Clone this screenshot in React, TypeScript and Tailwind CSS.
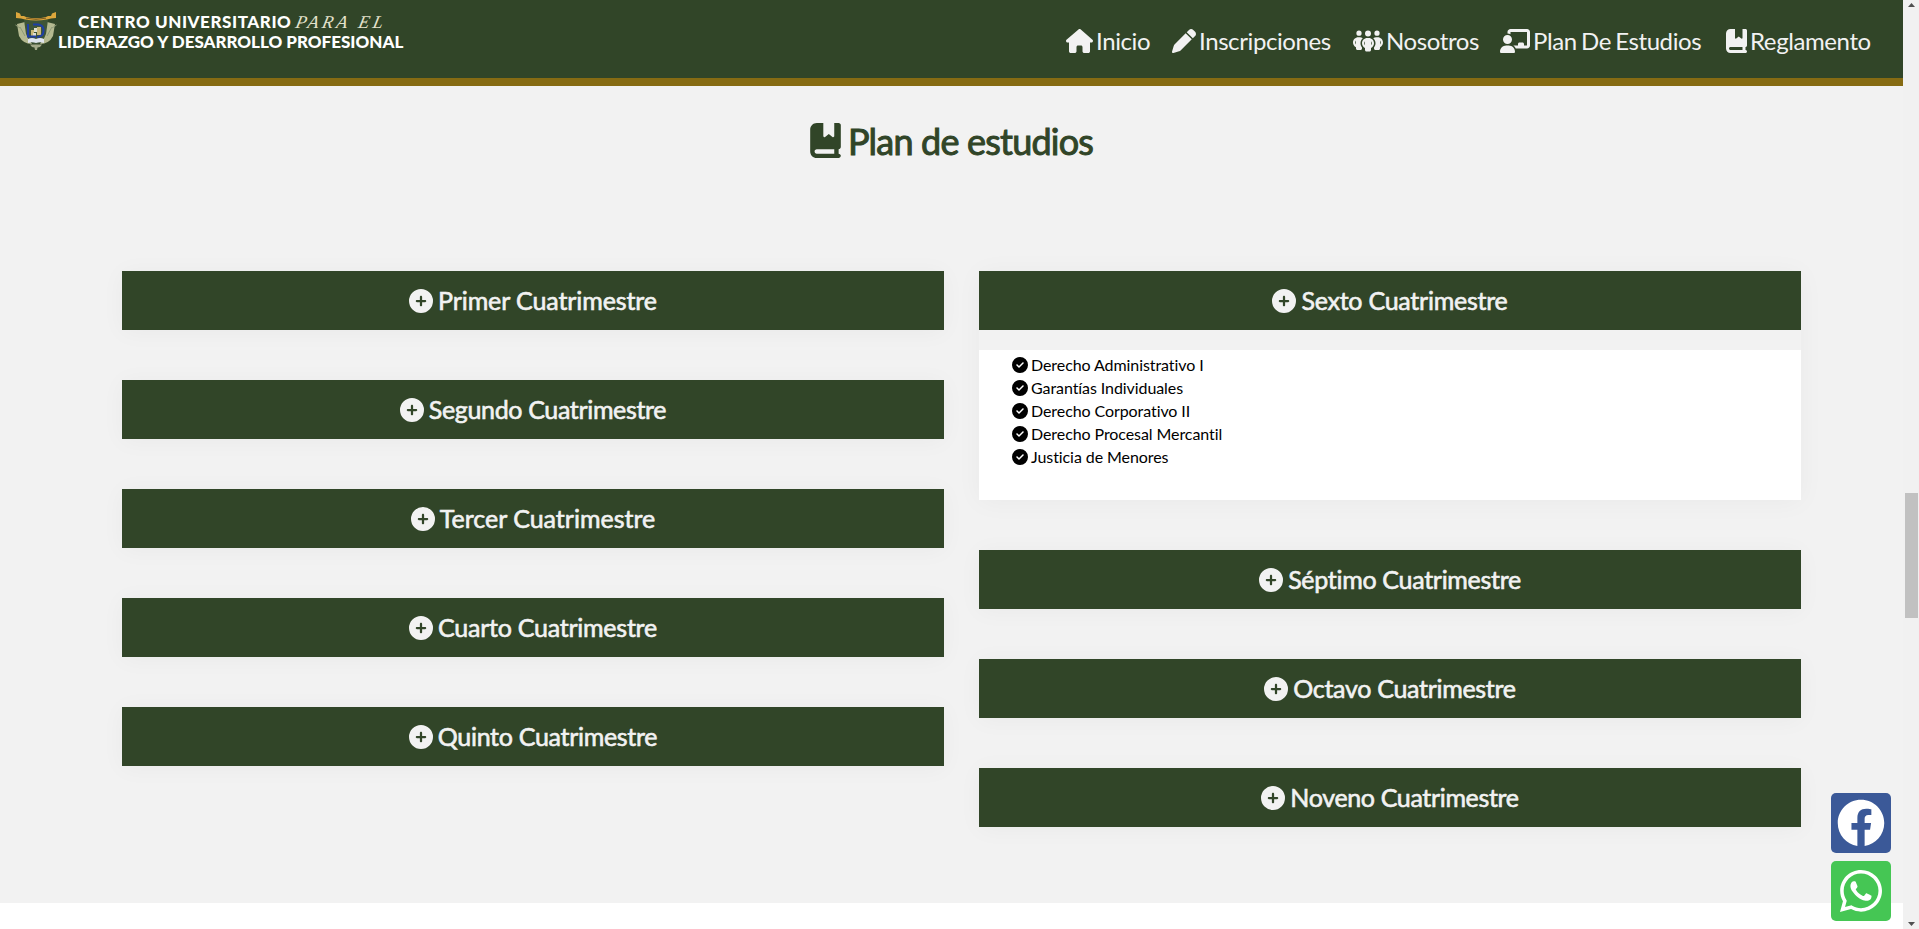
import React from "react";
import {
  FaHouse,
  FaPen,
  FaPeopleGroup,
  FaChalkboardUser,
  FaBookBookmark,
  FaCirclePlus,
  FaCircleCheck,
} from "react-icons/fa6";
import { FaFacebook, FaWhatsapp } from "react-icons/fa";

const nav = [
  { icon: FaHouse, label: "Inicio", width: "w-[106px]", iconWidth: "w-[27px]" },
  { icon: FaPen, label: "Inscripciones", width: "w-[181px]", iconWidth: "w-6" },
  { icon: FaPeopleGroup, label: "Nosotros", width: "w-[147px]", iconWidth: "w-[30px]" },
  { icon: FaChalkboardUser, label: "Plan De Estudios", width: "w-[226px]", iconWidth: "w-[30px]" },
  { icon: FaBookBookmark, label: "Reglamento", width: "w-[177px]", iconWidth: "w-[21px]" },
];

type Term = { name: string; tracking: string; subjects?: string[] };

const left: Term[] = [
  { name: "Primer", tracking: "tracking-[-0.1px]" },
  { name: "Segundo", tracking: "tracking-[-0.35px]" },
  { name: "Tercer", tracking: "tracking-[0px]" },
  { name: "Cuarto", tracking: "tracking-[-0.25px]" },
  { name: "Quinto", tracking: "tracking-[-0.3px]" },
];

const right: Term[] = [
  {
    name: "Sexto",
    tracking: "tracking-[-0.25px]",
    subjects: [
      "Derecho Administrativo I",
      "Garantías Individuales",
      "Derecho Corporativo II",
      "Derecho Procesal Mercantil",
      "Justicia de Menores",
    ],
  },
  { name: "Séptimo", tracking: "tracking-[-0.3px]" },
  { name: "Octavo", tracking: "tracking-[-0.3px]" },
  { name: "Noveno", tracking: "tracking-[-0.35px]" },
];

function Crest() {
  return (
    <svg className="h-[39px] w-[42px] shrink-0" viewBox="0 0 42 39">
      <path d="M2 12 L10 10 L13 26 L17 32 Q8 32 4 24 Z" fill="#b4b990" />
      <path d="M40 12 L32 10 L29 26 L25 32 Q34 32 38 24 Z" fill="#b4b990" />
      <path d="M0.500 13 L5 16 M41.500 13 L37 16 M5 15 L10 24 M37 15 L32 24" stroke="#8f9a78" fill="none" />
      <path d="M9 8 H33 L31 22 Q28 30 21 33 Q14 30 11 22 Z" fill="#3f5537" />
      <path d="M1 0 L5 1.500 L6 4 H9 L11 5 Q21 7.500 31 5 L33 4 H36 L37 1.500 L41 0 L41 6 L36 6.500 L32 7.500 Q21 9.500 10 7.500 L6 6.500 L1 6 Z" fill="#dca63c" />
      <path d="M11 6.200 Q21 8.500 31 6.200" stroke="#7c5b22" strokeWidth="1" fill="none" />
      <path d="M16 18 h3 v6 h-3 z M22 15 h4 v8 h-4 z" fill="#c9b878" />
      <path d="M19 16 h3 v4 h-3 z M18 21 h3 v3 h-3 z" fill="#dfe0cf" />
      <path d="M13 12 V24.500 H21 M18 12.500 H23 Q28.500 13 28.500 18.500 Q28.500 24.500 22 25" stroke="#1e3fa6" strokeWidth="2" fill="none" />
      <path d="M13 27 Q17 25 21 27 Q25 25 29 27 V31 Q25 29.500 21 31 Q17 29.500 13 31 Z" fill="#dfe5ee" />
      <path d="M15 32.500 H27 L25 35 L22.500 35.500 L22 38 H20 L19.500 35.500 L17 35 Z" fill="#a3aa8a" />
    </svg>
  );
}

function Card({ term }: { term: Term }) {
  return (
    <article className="shadow-[0_2px_25px_rgba(0,0,0,0.04)]">
      <h3 className="flex h-[59px] items-center justify-center gap-[5px] bg-[#314528] text-[25px] font-normal text-[#f2f2f2] [-webkit-text-stroke:0.6px_#f2f2f2]">
        <FaCirclePlus className="size-6" strokeWidth={0} />
        <span className={`pt-px ${term.tracking}`}>{term.name} Cuatrimestre</span>
      </h3>
      {term.subjects && (
        <div className="bg-[#f2f2f2] pt-5">
          <ul className="h-[150px] bg-white pt-[3px] pl-[33px] text-base leading-[23px] tracking-[-0.080px] text-black">
            {term.subjects.map((s) => (
              <li key={s} className="flex items-center gap-[3px]">
                <FaCircleCheck className="size-4" />
                <span>{s}</span>
              </li>
            ))}
          </ul>
        </div>
      )}
    </article>
  );
}

export default function App() {
  return (
    <div className="flex h-[929px] w-[1919px] overflow-hidden bg-white font-['Lato',sans-serif] [font-variant-ligatures:none]">
      <div className="relative flex w-[1903px] flex-col">
        <header className="flex h-[86px] items-start justify-between border-b-8 border-[#866b13] bg-[#314528] pl-[15px]">
          <div className="flex pt-[12px]">
            <Crest />
            <div className="ml-px w-[360px] text-[17px] leading-[20px] font-black text-white">
              <div className="flex items-center pl-[20px] whitespace-nowrap">
                <span className="tracking-[0.560px]">CENTRO UNIVERSITARIO</span>
                <span className="ml-[5px] -skew-x-12 font-['Liberation_Serif',serif] text-[18px] font-normal tracking-[3.400px] text-[#e4e2cc] italic">PARA EL</span>
              </div>
              <div className="whitespace-nowrap">LIDERAZGO Y DESARROLLO PROFESIONAL</div>
            </div>
          </div>
          <nav className="flex pt-[26px] text-[24px] leading-[29px] tracking-[-0.400px] text-[#f2f2f2] [word-spacing:-1.500px]">
            {nav.map(({ icon: Icon, label, width, iconWidth }) => (
              <a key={label} className={`flex items-center gap-[3px] whitespace-nowrap ${width}`}>
                <Icon className={`h-6 shrink-0 ${iconWidth}`} />
                <span>{label}</span>
              </a>
            ))}
          </nav>
        </header>
        <main className="h-[817px] bg-[#f2f2f2] px-[122px] pt-[33px]">
          <h2 className="flex h-[43px] items-center justify-center gap-[7px] text-[36px] font-normal tracking-[-0.800px] text-[#314528] [-webkit-text-stroke:1px_#314528]">
            <FaBookBookmark className="h-[35px] w-[31px]" strokeWidth={0} />
            <span>Plan de estudios</span>
          </h2>
          <div className="mt-[109px] grid grid-cols-[822px_822px] gap-[35px]">
            {[left, right].map((col, i) => (
              <div key={i} className="flex flex-col gap-[50px]">
                {col.map((t) => (
                  <Card key={t.name} term={t} />
                ))}
              </div>
            ))}
          </div>
        </main>
        <div className="absolute right-[12px] bottom-[8px] flex flex-col gap-2 text-white">
          <a className="flex size-[60px] items-center justify-center rounded-[5px] bg-[#3b5998]">
            <FaFacebook className="size-[48px]" />
          </a>
          <a className="flex size-[60px] items-center justify-center rounded-[5px] bg-[#45c654]">
            <FaWhatsapp className="size-[48px]" />
          </a>
        </div>
      </div>
      <div className="flex w-4 flex-col items-center bg-[#f1f1f1]">
        <svg className="h-[17px] w-[7px] shrink-0" viewBox="0 0 7 17"><path d="M0 7 L3.500 3 L7 7 Z" fill="#505050" /></svg>
        <div className="mt-[476px] ml-px h-[125px] w-[13px] bg-[#c1c1c1]" />
        <svg className="mt-auto h-[17px] w-[7px] shrink-0" viewBox="0 0 7 17"><path d="M0 10 L3.500 14 L7 10 Z" fill="#505050" /></svg>
      </div>
    </div>
  );
}
